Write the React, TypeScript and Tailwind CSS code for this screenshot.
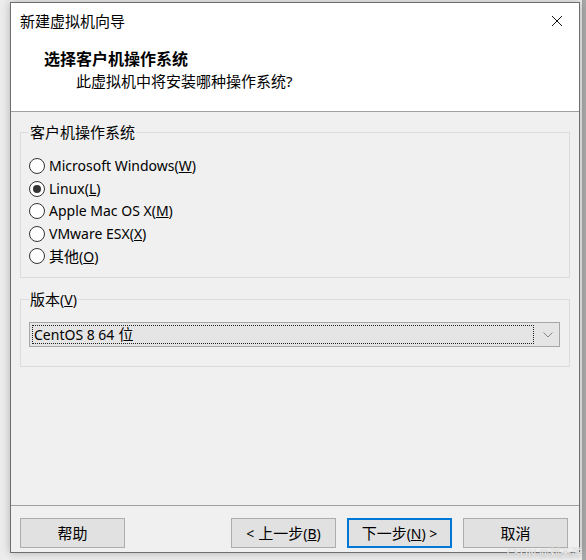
import React from "react";

const font = { fontFamily: '"Noto Sans", "Noto Sans CJK SC", sans-serif' };

function Radio({ checked, label, k, cjk }: { checked?: boolean; label: string; k: string; cjk?: boolean }) {
  return (
    <div className="flex items-center h-[22.5px]">
      <div className="w-[16px] h-[16px] rounded-full border border-[#333] bg-white flex items-center justify-center shrink-0">
        {checked && <div className="w-[8px] h-[8px] rounded-full bg-[#333]" />}
      </div>
      <span className="ml-[4px] text-[14px] text-black leading-none">
        {cjk ? <span className="text-[15px]">{label}</span> : label}(<span className="underline">{k}</span>)
      </span>
    </div>
  );
}

function Btn({ children, primary }: { children: React.ReactNode; primary?: boolean }) {
  return (
    <div
      className={
        "w-[105px] h-[30px] flex items-center justify-center text-[15px] text-black bg-[#e1e1e1] " +
        (primary ? "border-2 border-[#0078d7]" : "border border-[#adadad]")
      }
    >
      {children}
    </div>
  );
}

export default function App() {
  return (
    <div className="w-[586px] h-[560px] bg-[#ececec] relative overflow-hidden" style={font}>
      <div className="absolute right-0 top-0 w-[4px] h-full bg-[#a8a8a8]" />
      <div className="ml-[10px] mt-[2px] w-[570px] h-[551px] border border-[#6e6e6e] bg-[#f0f0f0] flex flex-col relative shadow-[0_0_8px_rgba(0,0,0,0.25)]">
        {/* title + header */}
        <div className="bg-white h-[109px] border-b border-[#a0a0a0] flex flex-col">
          <div className="h-[36px] flex items-center justify-between pl-[9px] pr-[16px]">
            <span className="text-[15px] text-black">新建虚拟机向导</span>
            <svg width="12" height="12" viewBox="0 0 12 12">
              <path d="M1 1 L11 11 M11 1 L1 11" stroke="#111" strokeWidth="1" />
            </svg>
          </div>
          <div className="pl-[33px] pt-[9px] text-[16px] font-bold text-black leading-[22px]">选择客户机操作系统</div>
          <div className="pl-[65px] text-[15px] text-black leading-[23px]">此虚拟机中将安装哪种操作系统?</div>
        </div>
        {/* content */}
        <div className="flex-1 flex flex-col px-[9px] pt-[10px]">
          <fieldset className="border border-[#dcdcdc] h-[156px] pl-[8px] pt-[13px]">
            <legend className="px-[1px] text-[15px] text-black leading-[20px]">客户机操作系统</legend>
            <Radio label="Microsoft Windows" k="W" />
            <Radio label="Linux" k="L" checked />
            <Radio label="Apple Mac OS X" k="M" />
            <Radio label="VMware ESX" k="X" />
            <Radio label="其他" k="O" cjk />
          </fieldset>
          <fieldset className="mt-[11px] border border-[#dcdcdc] h-[78px] pl-[8px] pr-[9px] pt-[12px]">
            <legend className="px-[1px] text-[15px] text-black leading-[20px]">
              版本<span className="text-[14px]">(<span className="underline">V</span>)</span>
            </legend>
            <div className="h-[25px] bg-[#e5e5e5] border border-[#a6a6a6] flex items-center pl-[2px] pr-[6px]">
              <div className="flex-1 h-[19px] border border-dotted border-[#222] flex items-center text-[14px] text-black leading-none pl-[1px]">
                CentOS 8 64 <span className="ml-[4px] text-[15px]">位</span>
              </div>
              <svg className="ml-[9px]" width="10" height="6" viewBox="0 0 10 6">
                <path d="M0.5 0.5 L5 5 L9.5 0.5" stroke="#888" strokeWidth="1" fill="none" />
              </svg>
            </div>
          </fieldset>
        </div>
        {/* footer */}
        <div className="border-t border-[#a0a0a0] h-[47px] flex items-start pt-[12px] pl-[9px] pr-[11px]">
          <Btn>帮助</Btn>
          <div className="flex-1" />
          <div className="flex gap-[11px]">
            <Btn><span className="text-[14px]">&lt;</span>&nbsp;上一步<span className="text-[14px]">(<span className="underline">B</span>)</span></Btn>
            <Btn primary>下一步<span className="text-[14px]">(<span className="underline">N</span>) &gt;</span></Btn>
            <Btn>取消</Btn>
          </div>
        </div>
      </div>
      <div className="absolute right-[4px] bottom-[2px] text-[11px] text-white/80 leading-none" style={{ textShadow: "0 0 1px #999" }}>
        CSDN @刘天洋
      </div>
    </div>
  );
}
